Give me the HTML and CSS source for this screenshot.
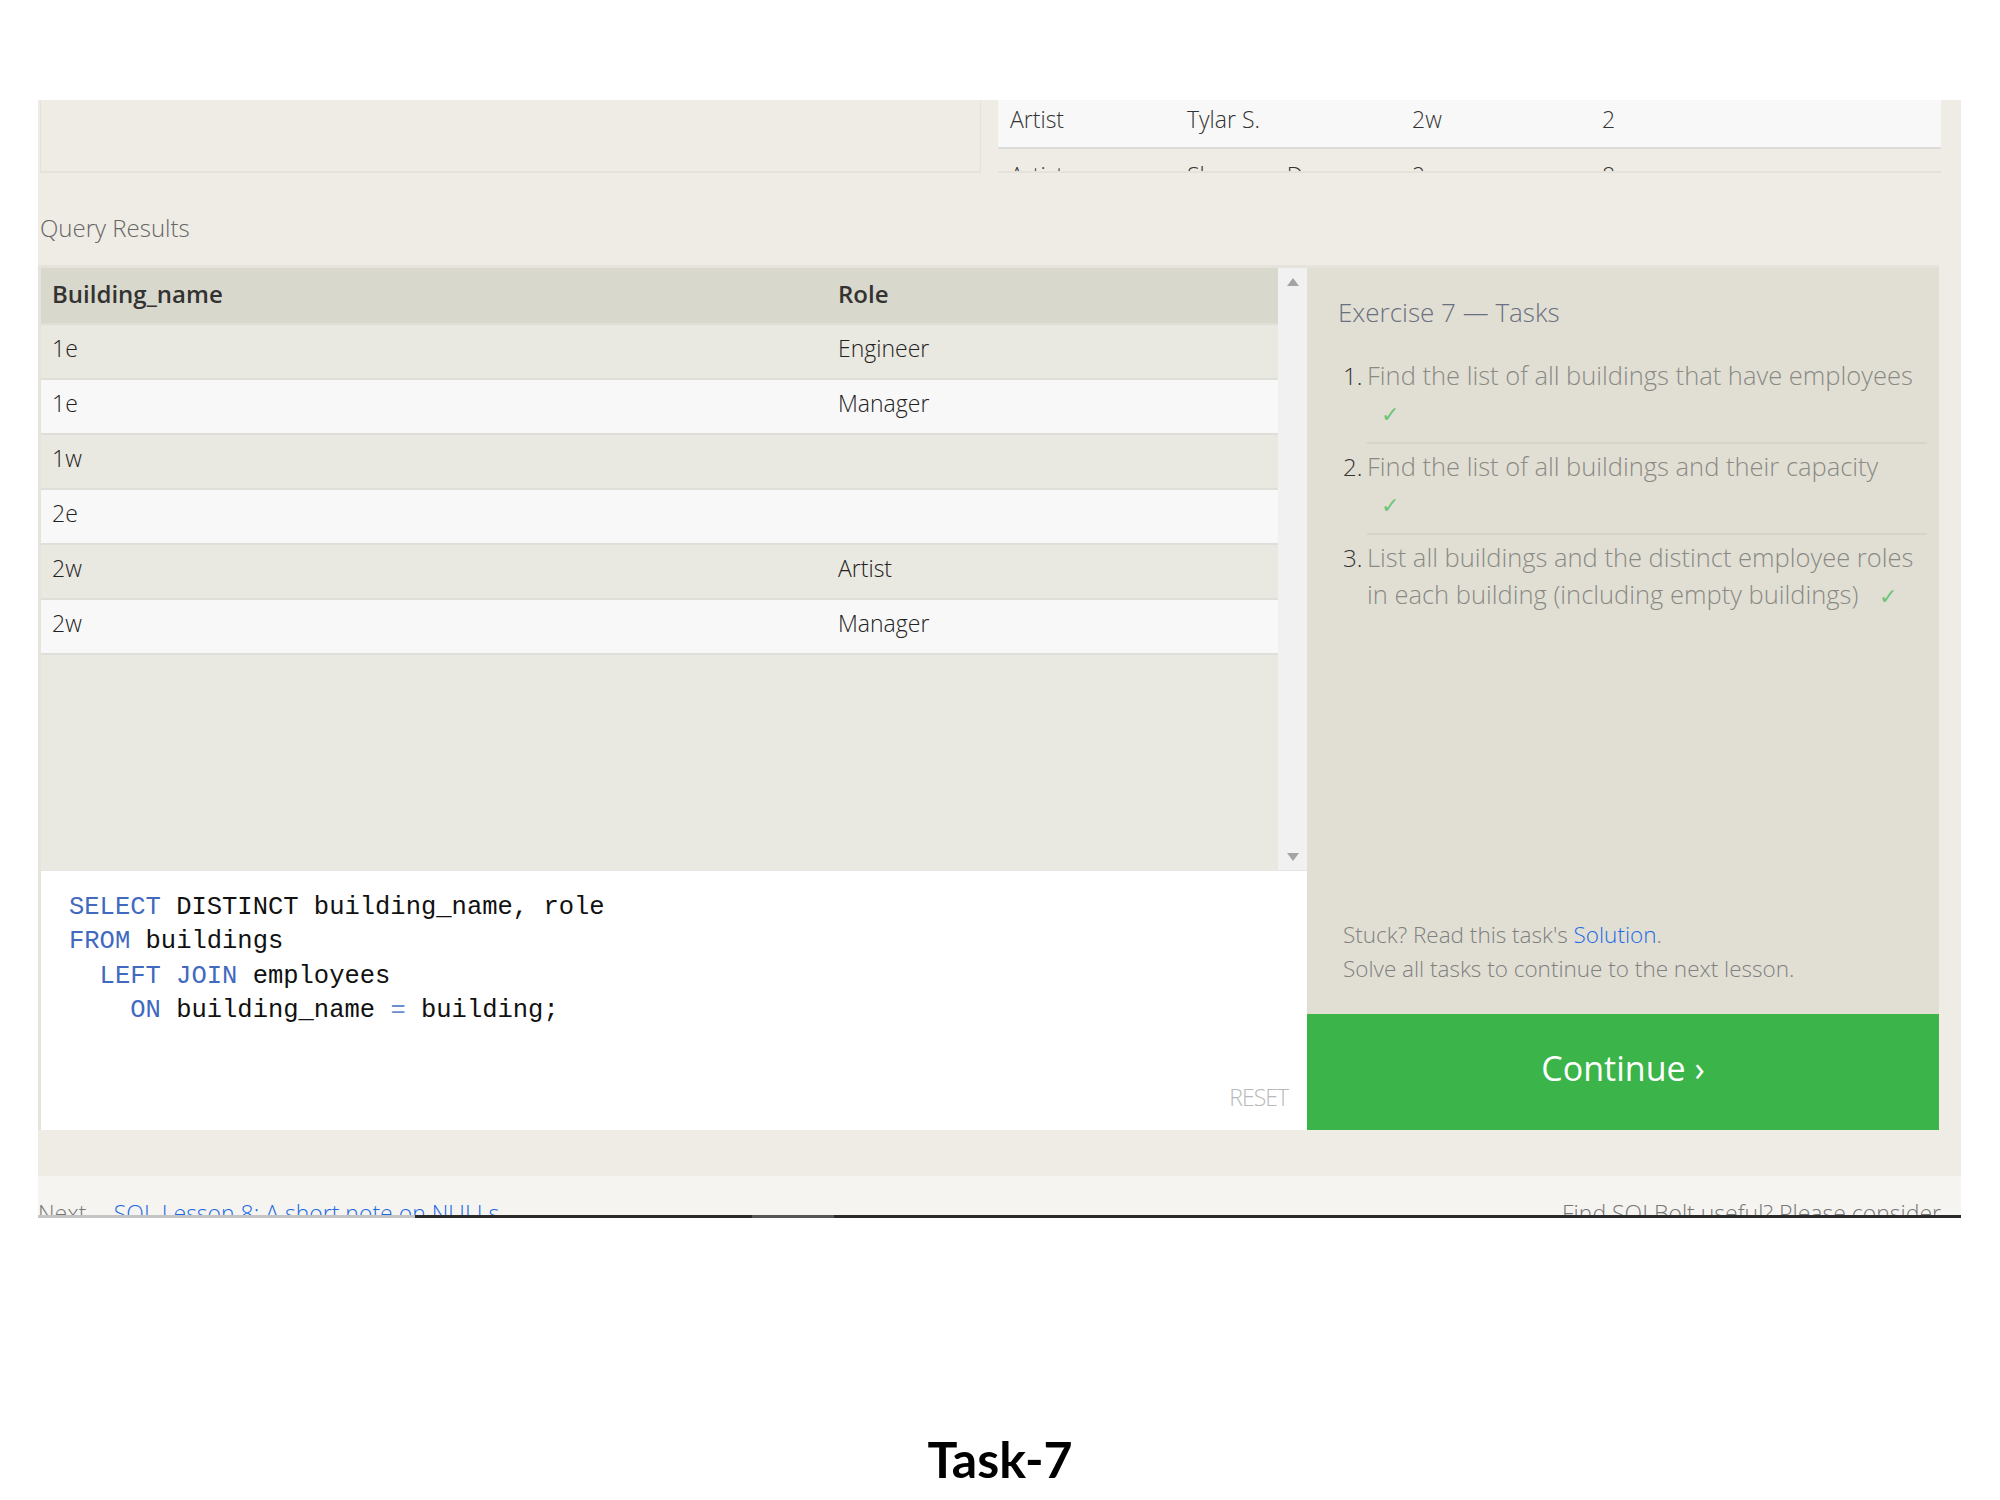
FILE: index.html
```html
<!DOCTYPE html>
<html>
<head>
<meta charset="utf-8">
<title>Task-7</title>
<link rel="stylesheet" href="styles.css">
</head>
<body>
<div class="frame">
  <div class="top">
    <div class="top-left"></div>
    <div class="top-right">
      <div class="trow white"><span class="c1">Artist</span><span class="c2">Tylar S.</span><span class="c3">2w</span><span class="c4">2</span></div>
      <div class="trow"><span class="c1">Artist</span><span class="c2">Sherman D.</span><span class="c3">2w</span><span class="c4">8</span></div>
    </div>
  </div>
  <div class="label">Query Results</div>
  <div class="workspace">
    <div class="leftcol">
      <div class="results">
        <div class="table">
          <div class="row head"><span class="col1">Building_name</span><span class="col2">Role</span></div>
          <div class="row odd"><span class="col1">1e</span><span class="col2">Engineer</span></div>
          <div class="row even"><span class="col1">1e</span><span class="col2">Manager</span></div>
          <div class="row odd"><span class="col1">1w</span><span class="col2"></span></div>
          <div class="row even"><span class="col1">2e</span><span class="col2"></span></div>
          <div class="row odd"><span class="col1">2w</span><span class="col2">Artist</span></div>
          <div class="row even"><span class="col1">2w</span><span class="col2">Manager</span></div>
        </div>
        <div class="scrollbar"><span class="arrow up"></span><span class="arrow down"></span></div>
      </div>
      <div class="editor">
<pre class="code"><span class="kw">SELECT</span> DISTINCT building_name, role
<span class="kw">FROM</span> buildings
  <span class="kw">LEFT JOIN</span> employees
    <span class="kw">ON</span> building_name <span class="op">=</span> building;</pre>
        <div class="reset">RESET</div>
      </div>
    </div>
    <div class="rightcol">
      <div class="tasks">
        <h2 class="ex-title">Exercise 7 — Tasks</h2>
        <ol class="task-list">
          <li><span class="num">1.</span><span class="ttext">Find the list of all buildings that have employees<br><span class="check">✓</span></span></li>
          <li><span class="num">2.</span><span class="ttext">Find the list of all buildings and their capacity<br><span class="check">✓</span></span></li>
          <li><span class="num">3.</span><span class="ttext">List all buildings and the distinct employee roles in each building (including empty buildings) <span class="check">✓</span></span></li>
        </ol>
        <div class="stuck">
          <p>Stuck? Read this task's <a class="link">Solution</a>.</p>
          <p>Solve all tasks to continue to the next lesson.</p>
        </div>
      </div>
      <div class="continue">Continue ›</div>
    </div>
  </div>
  <div class="band"></div>
  <div class="footer">
    <span class="next">Next – <a class="link next-link">SQL Lesson 8: A short note on NULLs</a></span>
    <span class="useful">Find SQLBolt useful? Please consider</span>
  </div>
  <div class="hbar"><span class="seg-light"></span><span class="seg-dark1"></span><span class="seg-mid"></span><span class="seg-dark2"></span></div>
</div>
<h1 class="caption">Task-7</h1>
</body>
</html>
```

FILE: styles.css
```css
html, body {
  margin: 0;
  padding: 0;
  background: #ffffff;
}

body {
  font-family: "Open Sans", "Liberation Sans", sans-serif;
  font-weight: 300;
  color: #333;
}

.frame {
  margin: 100px 39px 0 38px;
  background: #efece5;
}

/* top partial area */
.top {
  display: flex;
  height: 73px;
}

.top-left {
  margin-left: 2px;
  width: 939px;
  border-left: 1px solid #e4e2da;
  border-right: 1px solid #e4e2da;
  border-bottom: 2px solid #e4e2da;
}

.top-right {
  margin-left: 17px;
  width: 943px;
  overflow: hidden;
  border-bottom: 2px solid #e4e2da;
}

.trow {
  display: flex;
  height: 49px;
  box-sizing: border-box;
  padding-bottom: 10px;
  align-items: center;
  font-size: 23px;
  color: #333;
  border-bottom: 2px solid #dcdcdc;
}

.trow + .trow {
  padding-bottom: 0;
  padding-top: 4px;
}

.trow.white {
  background: #f8f8f8;
}

.trow .c1 { width: 177px; padding-left: 12px; }
.trow .c2 { width: 225px; }
.trow .c3 { width: 190px; }
.trow .c4 { width: 100px; }

.label {
  height: 92px;
  box-sizing: border-box;
  padding: 40px 0 0 2px;
  line-height: 30px;
  font-size: 24px;
  color: #666;
}

/* workspace */
.workspace {
  display: grid;
  grid-template-columns: 1266px 632px;
  width: 1898px;
  border-top: 3px solid #e5e3db;
  border-left: 3px solid #e5e3db;
}

.leftcol {
  display: flex;
  flex-direction: column;
}

.results {
  display: flex;
  height: 602px;
  background: #e9e8e1;
}

.table {
  flex: 1;
}

.row {
  display: flex;
  align-items: center;
  height: 53px;
  box-sizing: border-box;
  padding-bottom: 7px;
  border-bottom: 2px solid #dfded8;
  font-size: 23px;
  color: #222;
}

.row.head {
  height: 57px;
  padding-bottom: 5px;
  background: #d9d8cc;
  font-weight: 600;
  color: #333;
  font-size: 24px;
}

.row.odd { background: #e9e8e1; height: 55px; }
.row.even { background: #f8f8f8; height: 55px; }

.col1 {
  width: 786px;
  box-sizing: border-box;
  padding-left: 11px;
}

.col2 {
  flex: 1;
  padding-left: 11px;
}

.scrollbar {
  width: 29px;
  background: #f1f1f1;
  display: flex;
  flex-direction: column;
  justify-content: space-between;
  align-items: center;
  padding: 10px 0 9px;
  box-sizing: border-box;
}

.arrow {
  width: 0;
  height: 0;
  border-left: 6px solid transparent;
  border-right: 6px solid transparent;
}

.arrow.up { border-bottom: 8px solid #a4a4a4; }
.arrow.down { border-top: 8px solid #a4a4a4; }

.editor {
  height: 260px;
  box-sizing: border-box;
  background: #ffffff;
  border-top: 1px solid #e6e5df;
  padding: 20px 19px 0 28px;
  display: flex;
  flex-direction: column;
}

.code {
  margin: 0;
  font-family: "Liberation Mono", "DejaVu Sans Mono", monospace;
  font-size: 25.5px;
  line-height: 34.3px;
  color: #111;
  flex: 1;
}

.kw { color: #4169c0; }
.op { color: #6a8fd0; }

.reset {
  align-self: flex-end;
  font-size: 23px;
  color: #b9b9b9;
  letter-spacing: -1px;
  margin-bottom: 17px;
}

/* right */
.rightcol {
  display: flex;
  flex-direction: column;
}

.tasks {
  height: 746px;
  background: #e1dfd4;
  box-sizing: border-box;
  padding: 24px 12px 0 31px;
  display: flex;
  flex-direction: column;
}

.ex-title {
  margin: 0;
  font-size: 26px;
  font-weight: 300;
  line-height: 40px;
  color: #6a7080;
}

.task-list {
  list-style: none;
  margin: 21px 0 0 0;
  padding: 0;
}

.task-list li {
  display: flex;
  font-size: 25.5px;
  line-height: 37px;
  padding: 4px 0 10px;
}

.task-list li + li {
  border-top: 2px solid #d6d4c9;
  margin-left: 29px;
  padding-top: 4px;
}

.task-list li + li .num {
  margin-left: -29px;
}

.num {
  width: 24px;
  flex: none;
  padding-left: 5px;
  color: #333;
  font-size: 24px;
}

.ttext {
  color: #8a8a85;
}

.check {
  display: inline-block;
  color: #6cc47a;
  margin-left: 14px;
  font-size: 22px;
}

.stuck {
  margin-top: auto;
  padding: 0 0 28px 5px;
  font-size: 22.5px;
  color: #808080;
}

.stuck p {
  margin: 0;
  line-height: 34px;
}

.link {
  color: #1d6ae5;
  text-decoration: none;
}

.continue {
  height: 116px;
  background: #3bb54a;
  color: #ffffff;
  font-size: 34px;
  font-weight: 400;
  display: flex;
  align-items: center;
  justify-content: center;
  padding-bottom: 8px;
  box-sizing: border-box;
}

.band {
  height: 46px;
}

.footer {
  height: 39px;
  background: #f5f4f0;
  overflow: hidden;
  display: flex;
  justify-content: space-between;
  padding-right: 20px;
  font-size: 23px;
  color: #777;
  line-height: 30px;
}

.footer span {
  padding-top: 22px;
}

.next-link {
  margin-left: 4px;
}

.hbar {
  display: flex;
  height: 3px;
  background: #2a2a2a;
}

.seg-light { width: 377px; background: #c4c4c4; }
.seg-dark1 { width: 337px; background: #2a2a2a; }
.seg-mid { width: 82px; background: #555; }
.seg-dark2 { flex: 1; background: #2a2a2a; }

.caption {
  margin: 216px 0 0;
  text-align: center;
  font-family: Lato, "Open Sans", sans-serif;
  font-weight: 700;
  font-size: 50px;
  line-height: 50px;
  color: #000;
}
```
